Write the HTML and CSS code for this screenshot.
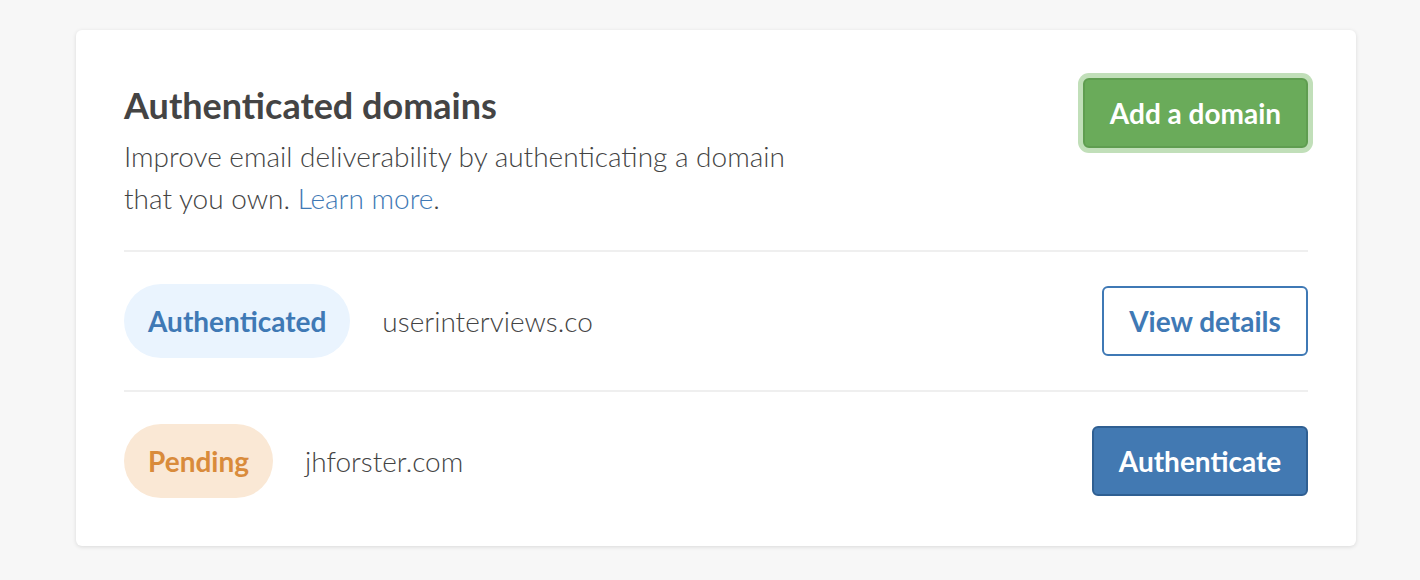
FILE: index.html
```html
<!DOCTYPE html>
<html lang="en">
<head>
  <meta charset="UTF-8">
  <meta name="viewport" content="width=device-width, initial-scale=1.0">
  <title>Authenticated domains</title>
  <link rel="stylesheet" href="styles.css">
</head>
<body>
  <div class="card">
    <div class="card-header">
      <div class="intro">
        <h1>Authenticated domains</h1>
        <p>Improve email deliverability by authenticating a domain that you own. <a href="#">Learn more</a>.</p>
      </div>
      <button class="btn btn-green">Add a domain</button>
    </div>

    <div class="domain-row">
      <span class="badge badge-ok">Authenticated</span>
      <span class="domain">userinterviews.co</span>
      <button class="btn btn-outline">View details</button>
    </div>

    <div class="domain-row">
      <span class="badge badge-pending">Pending</span>
      <span class="domain">jhforster.com</span>
      <button class="btn btn-blue">Authenticate</button>
    </div>
  </div>
</body>
</html>
```

FILE: styles.css
```css
body {
  margin: 0;
  padding: 30px 64px 34px 76px;
  background: #f7f7f7;
  font-family: Lato, "Open Sans", sans-serif;
  color: #444;
}
.card {
  background: #fff;
  border-radius: 6px;
  box-shadow: 0 1px 4px rgba(0, 0, 0, 0.12);
  padding: 48px 48px 48px;
}
.card-header {
  display: flex;
  justify-content: space-between;
  align-items: flex-start;
  padding-bottom: 31px;
  border-bottom: 2px solid #efefef;
}
h1 {
  margin: 9px 0 12px;
  font-size: 36px;
  line-height: 36px;
  font-weight: 700;
  color: #444;
}
.intro p {
  margin: 0;
  width: 690px;
  font-size: 28px;
  font-weight: 300;
  line-height: 42px;
}
.intro a {
  color: #3f79b5;
  text-decoration: none;
}
.btn {
  font-family: Lato, "Open Sans", sans-serif;
  font-size: 28px;
  font-weight: 700;
  border-radius: 6px;
  cursor: pointer;
  height: 70px;
  padding: 0 20px;
}
.btn-green {
  background: #6aab5a;
  border: 2px solid #5f9d50;
  color: #fff;
  box-shadow: 0 0 0 5px #c1dfb9;
  width: 225px;
}
.btn-outline {
  background: #fff;
  border: 2px solid #3f79b5;
  color: #3f79b5;
  width: 206px;
}
.btn-blue {
  background: #4279b2;
  border: 2px solid #2f5f92;
  color: #fff;
  width: 216px;
}
.domain-row {
  display: flex;
  align-items: center;
  padding: 32px 0;
  border-bottom: 2px solid #efefef;
}
.domain-row:last-child {
  border-bottom: none;
  padding-bottom: 0;
}
.badge {
  display: inline-flex;
  align-items: center;
  height: 74px;
  padding: 0 24px;
  border-radius: 37px;
  font-size: 28px;
  font-weight: 700;
}
.badge-ok {
  background: #eaf4fe;
  color: #3f79b5;
}
.badge-pending {
  background: #fae8d5;
  color: #d98b3b;
}
.domain {
  flex: 1;
  margin-left: 32px;
  font-size: 28px;
  font-weight: 300;
  color: #444;
}
```
